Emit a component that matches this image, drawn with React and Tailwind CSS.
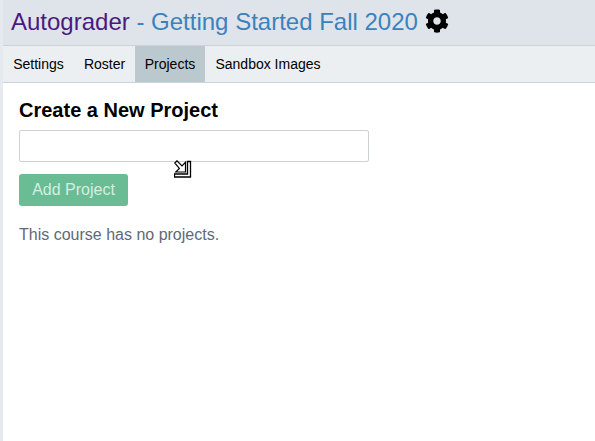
import React from "react";
import { FaCog } from "react-icons/fa";

const tabs = [
  { label: "Settings", width: "w-[71px]" },
  { label: "Roster", width: "w-[61px]" },
  { label: "Projects", width: "w-[70px]", active: true },
  { label: "Sandbox Images", width: "w-[126px]" },
];

function ResizeCursor() {
  return (
    <svg className="absolute left-[174px] top-[160px]" width="18" height="18" viewBox="0 0 18 18">
      <path d="M13.5 1.5H16.5V17H.5V14H13.5Z" fill="#fff" stroke="#000" strokeWidth="1.3" />
      <path d="M.8 3L3 .8L8 5.8L11.5 2.3V12H1.8L5.4 8.4Z" fill="#fff" stroke="#000" strokeWidth="1.2" />
    </svg>
  );
}

export default function App() {
  return (
    <div className="relative h-[441px] w-[595px] overflow-hidden border-l-[3px] border-[#e6eaef] bg-white font-['Liberation_Sans',Arial,sans-serif] text-black">
      <header className="flex h-[46px] items-center border-b border-[#cbd3d9] bg-[#dfe4eb] pb-[2px] pl-2 text-2xl">
        <a className="whitespace-pre text-[#4b1a80]">Autograder </a>
        <span className="whitespace-pre text-[#3b82bd]">- Getting Started Fall 2020</span>
        <FaCog className="ml-[6.6px] mt-[-2px] size-6 text-black" />
      </header>
      <nav className="flex h-[37px] border-b border-[#cbd3d9] bg-[#ebeff2] text-sm">
        {tabs.map((tab) => (
          <a
            key={tab.label}
            className={`flex items-center justify-center whitespace-nowrap ${tab.width} ${tab.active ? "bg-[#bbc8ce]" : ""}`}
          >
            {tab.label}
          </a>
        ))}
      </nav>
      <main className="flex flex-col items-start pl-4 pt-[13px]">
        <h1 className="text-xl font-bold leading-7">Create a New Project</h1>
        <input className="mt-[6px] h-8 w-[350px] rounded-[2px] border border-[#ccd2d8] bg-white outline-none" />
        <button className="mt-3 h-8 w-[109px] rounded-[3px] bg-[#69bc93] pb-px text-base text-[#d5eee2]">
          Add Project
        </button>
        <p className="mt-[17px] text-base text-[#606975]">This course has no projects.</p>
      </main>
      <div className="absolute -left-[3px] top-0">
        <ResizeCursor />
      </div>
    </div>
  );
}
